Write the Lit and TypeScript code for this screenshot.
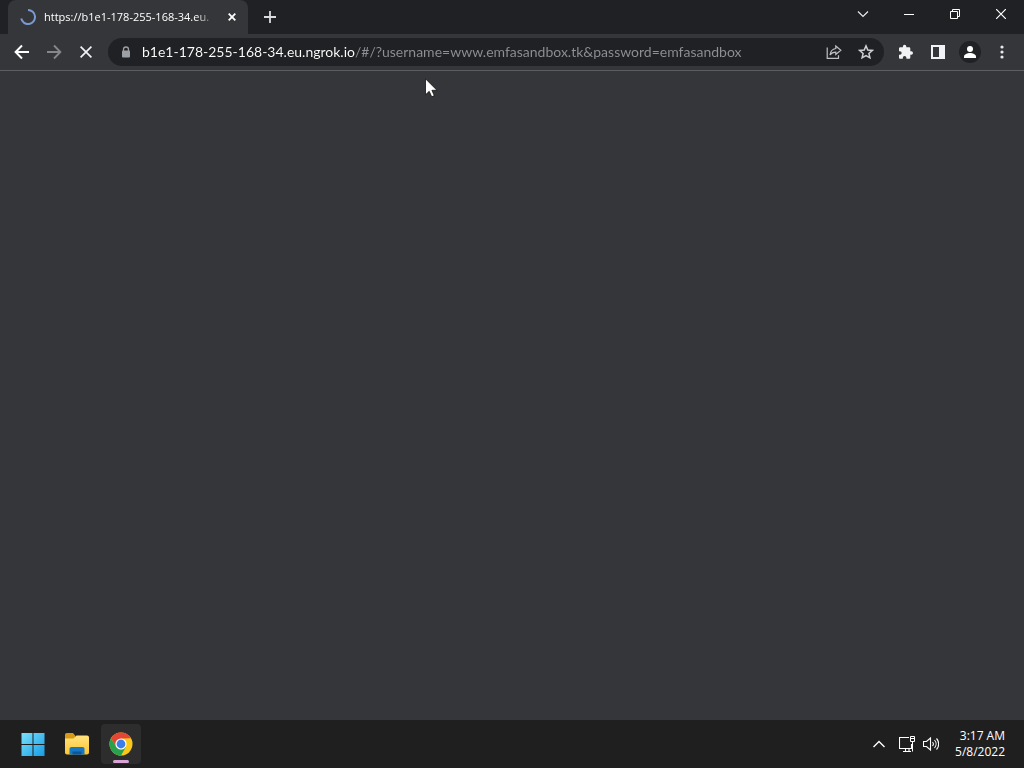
import { LitElement, html, css, svg } from "lit";
import { customElement, property } from "lit/decorators.js";

const icon = (size: number, body: unknown) => html`<svg
  width=${size} height=${size} viewBox="0 0 ${size} ${size}" aria-hidden="true">${body}</svg>`;

const spinner = icon(16, svg`<path d="M8 1a7 7 0 1 1-6.8 8.6" fill="none" stroke="#8ab4f8" stroke-opacity=".8" stroke-width="2"/>`);
const tabClose = icon(8, svg`<path d="M.7.7l6.6 6.6M7.3.7L.7 7.3" stroke="#fff" stroke-width="1.8"/>`);
const plus = icon(12, svg`<path d="M6 0v12M0 6h12" stroke="#dadce0" stroke-width="1.8"/>`);
const chevronDown = icon(12, svg`<path d="M1 3.5l5 5 5-5" fill="none" stroke="#e8eaed" stroke-width="1.2"/>`);
const minimize = icon(10, svg`<path d="M0 5.5h10" stroke="#fff"/>`);
const restore = icon(10, svg`<path d="M.5 2.5h7v7h-7zM2.5 2.5v-2h7v7h-2" fill="none" stroke="#fff"/>`);
const windowClose = icon(10, svg`<path d="M0 0l10 10M10 0L0 10" stroke="#fff" stroke-width="1.2"/>`);
const back = icon(16, svg`<path d="M15 8H2M8 1.5L1.6 8 8 14.5" fill="none" stroke="#fff" stroke-width="2"/>`);
const forward = icon(16, svg`<path d="M1 8h13M8 1.5L14.4 8 8 14.5" fill="none" stroke="#85878b" stroke-width="1.8"/>`);
const stop = icon(12, svg`<path d="M.6.6l10.8 10.8M11.4.6L.6 11.4" stroke="#f1f3f4" stroke-width="1.7"/>`);
const lock = icon(12, svg`<path d="M3.5 5V3.500a2.500 2.500 0 0 1 5 0V5" fill="none" stroke="#9aa0a6" stroke-width="1.300"/><rect x="2" y="4.600" width="8" height="7" rx="1" fill="#9aa0a6"/>`);
const share = icon(16, svg`<path d="M1.2 3.5v10.8h11.3v-3M9.8 2l5 4.2-5 4.2V8.2C7 8.2 5.300 9 4 11c.4-3.600 2.500-6 5.800-6.500z" fill="none" stroke="#bdc1c6" stroke-width="1.2"/>`);
const star = icon(16, svg`<path d="M8 1.900l1.800 4.100 4.500.4-3.400 3 1 4.400L8 11.500l-3.900 2.300 1-4.400-3.400-3 4.500-.4z" fill="none" stroke="#cfd1d4" stroke-width="1.500"/>`);
const puzzle = icon(16, svg`<path d="M13.300 7.300h-1V4.600c0-.8-.6-1.300-1.300-1.300H8.300v-.9a1.700 1.700 0 0 0-3.400 0v.9H2.300C1.500 3.300 1 3.900 1 4.600v2.600h.9a1.800 1.800 0 0 1 0 3.600H1v2.600c0 .8.5 1.300 1.300 1.300h2.500v-.9a1.800 1.800 0 0 1 3.600 0v.9H11c.7 0 1.300-.5 1.300-1.300v-2.700h1a1.700 1.700 0 0 0 0-3.400z" fill="#f1f3f4"/>`);
const sidePanel = icon(14, svg`<path d="M0 0h14v14H0zM2 2v10h6V2z" fill="#f1f3f4" fill-rule="evenodd"/>`);
const avatar = icon(22, svg`<circle cx="11" cy="11" r="11" fill="#202124"/><circle cx="11" cy="8" r="3" fill="#fff"/><path d="M5 17v-1.500c0-2.200 3.500-3.500 6-3.500s6 1.300 6 3.500V17z" fill="#fff"/>`);
const dots = icon(16, svg`<g fill="#e8eaed"><circle cx="8" cy="3" r="1.600"/><circle cx="8" cy="8" r="1.600"/><circle cx="8" cy="13" r="1.600"/></g>`);
const pointer = html`<svg class="pointer" width="14" height="20" viewBox="0 0 14 20" aria-hidden="true">
  <path d="M.5.8v16l3.700-3.500 2.500 5.500 2.600-1.200-2.400-5.300h5.100z" fill="#fff" stroke="#111" stroke-width=".8"/></svg>`;
const start = icon(24, svg`<defs><linearGradient id="w" x1="0" y1="0" x2="24" y2="24" gradientUnits="userSpaceOnUse">
  <stop offset="0" stop-color="#7fe3fd"/><stop offset="1" stop-color="#149be4"/></linearGradient></defs>
  <path d="M.5 1h11v11H.5zM12.500 1h11v11h-11zM.5 13h11v11H.5zM12.500 13h11v11h-11z" fill="url(#w)"/>`);
const folder = icon(26, svg`<defs><linearGradient id="f" x1="0" y1="6" x2="0" y2="24" gradientUnits="userSpaceOnUse">
  <stop offset="0" stop-color="#ffe07a"/><stop offset="1" stop-color="#fcc52c"/></linearGradient></defs>
  <path d="M1 4c0-1.100.7-2 1.800-2H9l2.500 3v5H1z" fill="#d79a14"/>
  <path d="M1 7.500h8.500l3-3H23c1.200 0 2 .8 2 2v15c0 1-.8 2-2 2H3c-1.200 0-2-1-2-2z" fill="url(#f)"/>
  <path d="M5.500 23.500V18c0-1.200.8-2 2-2h11c1.200 0 2 .8 2 2v5.500z" fill="#1877c5"/><path d="M8.500 23.500v-3h9v3z" fill="#0c579b"/>`);
const chrome = icon(24, svg`<circle cx="12" cy="12" r="11.500" fill="#fbc719"/>
  <path d="M2.040 6.250A11.500 11.500 0 0 1 21.960 6.250L12 6.500 7.200 15z" fill="#e34537"/>
  <path d="M2.040 6.250A11.500 11.500 0 0 0 12 23.500L17 14.800 12 17.500 7.200 14.800z" fill="#29a04b"/>
  <circle cx="12" cy="12" r="5.600" fill="#fff"/><circle cx="12" cy="12" r="4.400" fill="#3b7de9"/>`);
const chevronUp = icon(12, svg`<path d="M.5 9L6 3.500 11.500 9" fill="none" stroke="#fff" stroke-width="1.400"/>`);
const network = icon(16, svg`<path d="M10 1.500H.5v11h12V8M4 15.500h8M6.500 12.500v3M10 12.500v3" fill="none" stroke="#fff" stroke-width="1.100"/>
  <path d="M11.500.5h4v5h-4zM13.500 5.500v10M11.500 2.500h4" fill="none" stroke="#fff"/>`);
const volume = icon(16, svg`<path d="M.5 5.500h3L7.500 2v12l-4-3.500h-3z" fill="none" stroke="#fff" stroke-width="1.100"/>
  <path d="M9.500 6a3 3 0 0 1 0 4M11.500 4a6 6 0 0 1 0 8M13.500 2.500a8 8 0 0 1 0 11" fill="none" stroke="#fff" stroke-width="1.100"/>`);

const reset = css`
  :host, * { box-sizing: border-box; }
  svg { display: block; flex: none; }
  button {
    display: flex; align-items: center; justify-content: center;
    flex: none; margin: 0; padding: 0; border: 0; background: none; font: inherit; color: inherit;
  }
`;

@customElement("tab-strip")
class TabStrip extends LitElement {
  @property() title = "";

  static styles = [reset, css`
    :host { display: flex; height: 34px; padding-left: 8px; background: #202124; color: #fff; }
    .tab {
      display: flex; align-items: center; width: 240px; padding: 0 12px; gap: 8px;
      background: #35363a; border-radius: 8px 8px 0 0;
    }
    .title {
      flex: 1; min-width: 0; overflow: hidden; white-space: nowrap; font-size: 11px; line-height: 16px;
      mask-image: linear-gradient(to right, #000 calc(100% - 20px), transparent);
    }
    .close { width: 16px; height: 16px; margin-right: -4px; }
    .new { width: 28px; margin-left: 8px; }
    .controls { display: flex; height: 28px; margin-left: auto; }
    .controls button { width: 46px; }
  `];

  render() {
    return html`
      <div class="tab">${spinner}<span class="title">${this.title}</span>
        <button class="close" aria-label="Close tab">${tabClose}</button></div>
      <button class="new" aria-label="New tab">${plus}</button>
      <div class="controls">
        <button aria-label="Search tabs">${chevronDown}</button>
        <button aria-label="Minimize">${minimize}</button>
        <button aria-label="Restore">${restore}</button>
        <button aria-label="Close">${windowClose}</button>
      </div>`;
  }
}

@customElement("browser-toolbar")
class BrowserToolbar extends LitElement {
  @property() url = "";

  static styles = [reset, css`
    :host {
      display: flex; align-items: center; height: 37px; padding: 0 6px;
      background: #35363a; border-bottom: 1px solid #5d5e62;
    }
    button { width: 32px; height: 28px; }
    .address {
      display: flex; align-items: center; flex: 1; min-width: 0; height: 28px;
      margin: 0 6px; padding: 0 2px 0 12px; border-radius: 14px; background: #202124;
    }
    .field { display: flex; align-items: center; flex: 1; gap: 10px; min-width: 0; }
    /* The host name is bright, the path and query after it are dimmed. */
    input {
      flex: 1; min-width: 0; padding: 0; border: 0; outline: 0;
      font: 14px/20px Lato, "Open Sans", sans-serif; color: #fff;
      background: linear-gradient(to right, #fff 213px, #8d9095 213px) text;
      -webkit-text-fill-color: transparent;
    }
  `];

  render() {
    return html`
      <button aria-label="Back">${back}</button>
      <button aria-label="Forward">${forward}</button>
      <button aria-label="Stop loading">${stop}</button>
      <div class="address">
        <label class="field">${lock}<input type="text" aria-label="Address" .value=${this.url} /></label>
        <button aria-label="Share this page">${share}</button>
        <button aria-label="Bookmark this tab">${star}</button>
      </div>
      <button aria-label="Extensions">${puzzle}</button>
      <button aria-label="Side panel">${sidePanel}</button>
      <button aria-label="Profile">${avatar}</button>
      <button aria-label="Menu">${dots}</button>`;
  }
}

@customElement("task-bar")
class TaskBar extends LitElement {
  static styles = [reset, css`
    :host {
      display: flex; align-items: center; justify-content: space-between;
      height: 48px; padding: 0 19px 0 13px; background: #1f1f1f; color: #fff;
    }
    .apps { display: flex; gap: 4px; }
    .apps button { position: relative; width: 40px; height: 40px; border-radius: 4px; }
    .apps .active { background: #2d2d2d; }
    .active::after {
      content: ""; position: absolute; bottom: 1px; left: 12px; right: 12px; height: 3px;
      border-radius: 2px; background: #d9a5d6;
    }
    .tray { display: flex; align-items: center; }
    .tray button { height: 40px; }
    .tray .more { width: 32px; margin-right: 4px; }
    .tray .status { gap: 8px; margin-right: 16px; }
    .tray .clock { display: block; text-align: right; font-size: 12px; line-height: 16px; }
    time { display: block; }
  `];

  render() {
    return html`
      <div class="apps">
        <button aria-label="Start">${start}</button>
        <button aria-label="File Explorer">${folder}</button>
        <button class="active" aria-label="Google Chrome">${chrome}</button>
      </div>
      <div class="tray">
        <button class="more" aria-label="Hidden icons">${chevronUp}</button>
        <button class="status" aria-label="Network and volume">${network}${volume}</button>
        <button class="clock"><time>3:17 AM</time><time>5/8/2022</time></button>
      </div>`;
  }
}

@customElement("app-root")
class AppRoot extends LitElement {
  static styles = css`
    :host {
      display: flex; flex-direction: column; height: 100vh; overflow: hidden;
      background: #35363a; font-family: "Open Sans", "Noto Sans", sans-serif;
    }
    main { flex: 1; }
    .pointer { position: absolute; left: 425px; top: 78px; }
  `;

  render() {
    return html`
      <tab-strip title="https://b1e1-178-255-168-34.eu."></tab-strip>
      <browser-toolbar url="b1e1-178-255-168-34.eu.ngrok.io/#/?username=www.emfasandbox.tk&password=emfasandbox"></browser-toolbar>
      <main></main>
      <task-bar></task-bar>
      ${pointer}`;
  }
}
